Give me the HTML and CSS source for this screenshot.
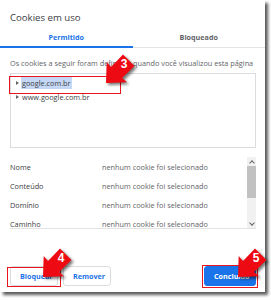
FILE: index.html
```html
<!DOCTYPE html>
<html lang="pt-BR">
<head>
<meta charset="utf-8">
<title>Cookies em uso</title>
<link rel="stylesheet" href="styles.css">
</head>
<body>
<div class="dialog">
  <h1 class="title">Cookies em uso</h1>
  <div class="tabs">
    <div class="tab active">Permitido</div>
    <div class="tab">Bloqueado</div>
  </div>
  <p class="desc">Os cookies a seguir foram definidos quando você visualizou esta página</p>
  <div class="tree">
    <div class="node"><span class="tri"></span><span class="label selected">google.com.br</span></div>
    <div class="node"><span class="tri"></span><span class="label">www.google.com.br</span></div>
  </div>
  <div class="details">
    <div class="rows">
      <div class="row"><span class="key">Nome</span><span class="val">nenhum cookie foi selecionado</span></div>
      <div class="row"><span class="key">Conteúdo</span><span class="val">nenhum cookie foi selecionado</span></div>
      <div class="row"><span class="key">Domínio</span><span class="val">nenhum cookie foi selecionado</span></div>
      <div class="row"><span class="key">Caminho</span><span class="val">nenhum cookie foi selecionado</span></div>
    </div>
    <div class="scrollbar">
      <span class="arrow up"></span>
      <span class="track"><span class="thumb"></span></span>
      <span class="arrow down"></span>
    </div>
  </div>
  <div class="actions">
    <div class="left">
      <button class="btn">Bloquear</button>
      <button class="btn">Remover</button>
    </div>
    <button class="btn primary">Concluído</button>
  </div>

  <div class="mark mark-tree"></div>
  <div class="mark mark-block"></div>
  <div class="mark mark-done"></div>

  <div class="callout c3"><svg viewBox="0 0 36 36" width="36" height="36"><polygon points="3,33 3.7,12 8,17 20,4.5 31.5,16 19,28 24,32.3"/></svg><span class="num">3</span></div>
  <div class="callout c4"><svg viewBox="0 0 36 36" width="36" height="36"><polygon points="3,33 3.7,12 8,17 20,4.5 31.5,16 19,28 24,32.3"/></svg><span class="num">4</span></div>
  <div class="callout c5"><svg viewBox="0 0 36 36" width="36" height="36"><polygon points="3,33 3.7,12 8,17 20,4.5 31.5,16 19,28 24,32.3"/></svg><span class="num">5</span></div>
</div>
</body>
</html>
```
FILE: styles.css
```css
* { box-sizing: border-box; }
html, body { margin: 0; padding: 0; }
body {
  width: 271px;
  height: 300px;
  background: #fff;
  font-family: "Open Sans", "Noto Sans", sans-serif;
  overflow: hidden;
}
.dialog {
  position: relative;
  width: 265px;
  height: 292px;
  background: #fff;
  box-shadow: 3px 3px 3px rgba(0,0,0,0.65);
  padding-top: 11px;
  display: flex;
  flex-direction: column;
}
.title {
  margin: 0 0 0 10px;
  font-size: 9.6px;
  font-weight: normal;
  color: #3c4043;
  line-height: 14px;
}
.tabs {
  margin-top: 5px;
  display: flex;
  border-bottom: 1px solid #e3e3e3;
}
.tab {
  flex: 1;
  text-align: center;
  font-size: 7.2px;
  font-weight: bold;
  color: #5f6368;
  line-height: 14px;
  padding-bottom: 2px;
  border-bottom: 2px solid transparent;
  margin-bottom: -1px;
}
.tab.active {
  color: #1a73e8;
  border-bottom-color: #1a73e8;
}
.desc {
  margin: 9px 10px 0;
  font-size: 7.3px;
  line-height: 12px;
  color: #5f6368;
  white-space: nowrap;
}
.tree {
  margin: 4px 9px 0 10px;
  height: 75px;
  border: 1px solid #dadce0;
  padding: 2px 0 0 4px;
}
.node {
  display: flex;
  align-items: center;
  height: 14px;
  font-size: 7.3px;
  color: #3c4043;
}
.tri {
  width: 0;
  height: 0;
  border-left: 3px solid #666;
  border-top: 2px solid transparent;
  border-bottom: 2px solid transparent;
  margin: 0 2px 0 1px;
}
.label { padding: 1px 1px; line-height: 10px; }
.label.selected { background: #c5d8f5; }
.details {
  margin: 9px 9px 0 10px;
  height: 72px;
  border-bottom: 1px solid #e3e3e3;
  display: flex;
}
.rows {
  flex: 1;
  overflow: hidden;
}
.row {
  display: flex;
  height: 19px;
  align-items: center;
  font-size: 7.3px;
  color: #5f6368;
}
.key { width: 92px; color: #3c4043; }
.scrollbar {
  width: 9px;
  display: flex;
  flex-direction: column;
  background: #f1f1f1;
}
.arrow {
  height: 9px;
  position: relative;
  background: #f1f1f1;
}
.arrow::after {
  content: "";
  position: absolute;
  left: 2.5px;
  width: 3px;
  height: 3px;
  border-left: 1px solid #666;
  border-top: 1px solid #666;
}
.arrow.up::after { top: 4px; transform: rotate(45deg); }
.arrow.down::after { top: 2px; transform: rotate(225deg); }
.track { flex: 1; display: flex; flex-direction: column; }
.thumb { height: 32px; background: #c1c1c1; }
.actions {
  margin-top: auto;
  margin-bottom: 6px;
  padding: 0 10px;
  display: flex;
  justify-content: space-between;
  align-items: center;
}
.left { display: flex; gap: 5px; }
.btn {
  height: 20px;
  border: 1px solid #dadce0;
  border-radius: 3px;
  background: #fff;
  color: #1a73e8;
  font-family: "Open Sans", "Noto Sans", sans-serif;
  font-weight: bold;
  font-size: 7.2px;
  padding: 0 9px;
  width: 48px;
}
.btn.primary {
  background: #1a73e8;
  border-color: #1a73e8;
  color: #fff;
  width: 52px;
  margin-right: -1px;
}
.mark {
  position: absolute;
  border: 1.5px solid #e8141e;
}
.mark-tree { left: 9px; top: 76px; width: 112px; height: 18px; }
.mark-block { left: 7px; top: 267px; width: 54px; height: 20px; }
.mark-done { left: 202px; top: 265px; width: 56px; height: 23px; }
.callout {
  position: absolute;
  width: 36px;
  height: 36px;
}
.callout svg {
  display: block;
  fill: #ee0a12;
  filter: drop-shadow(2px 2px 1.5px rgba(0,0,0,0.55));
}
.num {
  position: absolute;
  left: 15px;
  top: 8px;
  width: 12px;
  text-align: center;
  color: #fff;
  font-family: "Liberation Sans", Arial, sans-serif;
  font-weight: bold;
  font-size: 12px;
  line-height: 12px;
}
.c3 { left: 103px; top: 50px; }
.c4 { left: 40px; top: 244px; }
.c5 { left: 235px; top: 244px; }
```
